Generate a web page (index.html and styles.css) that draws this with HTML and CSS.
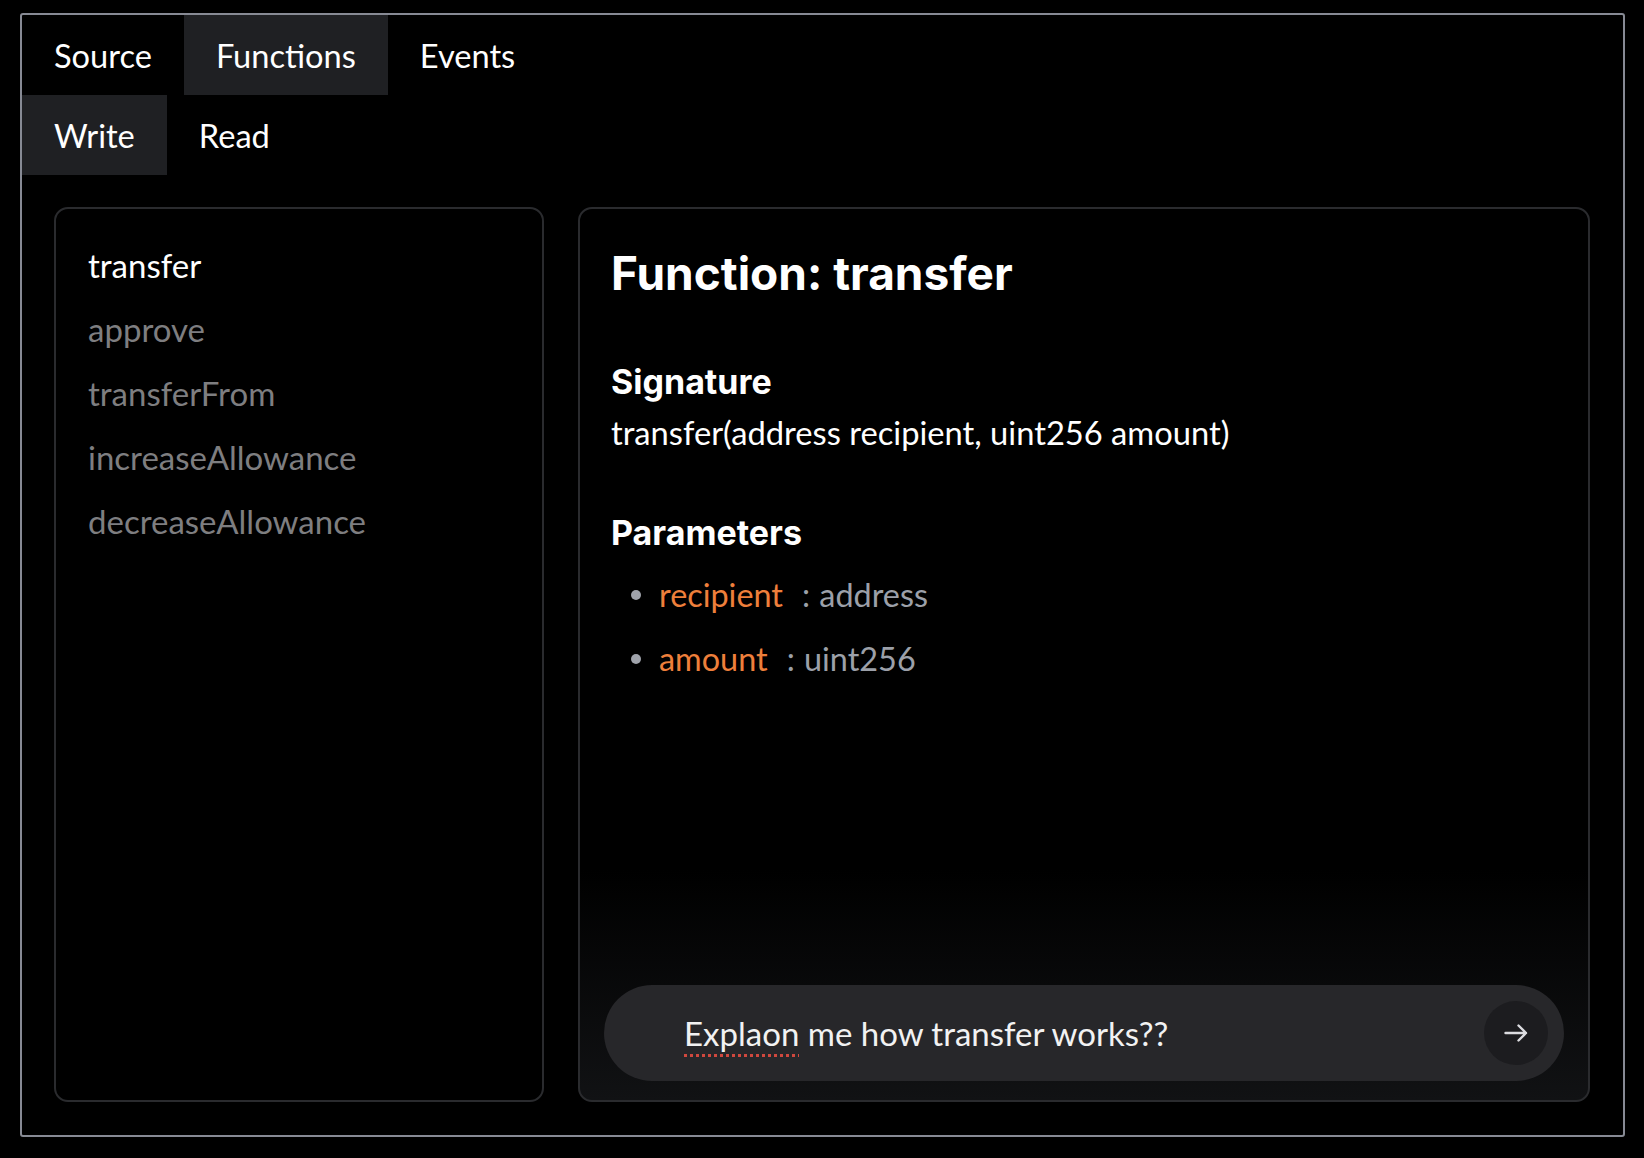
FILE: index.html
```html
<!DOCTYPE html>
<html lang="en">
<head>
<meta charset="utf-8">
<title>Contract Functions</title>
<link rel="stylesheet" href="styles.css">
</head>
<body>
<div class="panel">
  <nav class="tabs">
    <div class="tab">Source</div>
    <div class="tab active">Functions</div>
    <div class="tab">Events</div>
  </nav>
  <nav class="tabs">
    <div class="tab active">Write</div>
    <div class="tab">Read</div>
  </nav>
  <div class="content">
    <aside class="card fn-list">
      <div class="fn-item selected">transfer</div>
      <div class="fn-item">approve</div>
      <div class="fn-item">transferFrom</div>
      <div class="fn-item">increaseAllowance</div>
      <div class="fn-item">decreaseAllowance</div>
    </aside>
    <section class="card detail">
      <div class="detail-body">
        <h1 class="title">Function: transfer</h1>
        <h2 class="heading sig-heading">Signature</h2>
        <div class="signature">transfer(address recipient, uint256 amount)</div>
        <h2 class="heading params-heading">Parameters</h2>
        <ul class="params">
          <li><span class="pname">recipient</span><span class="ptype">: address</span></li>
          <li><span class="pname">amount</span><span class="ptype">: uint256</span></li>
        </ul>
      </div>
      <div class="chat">
        <div class="pill">
          <div class="pill-text"><span class="misspelled">Explaon</span> me how transfer works??</div>
          <button class="send" type="button" aria-label="Send">
            <svg width="24" height="24" viewBox="0 0 24 24" fill="none" stroke="#dcdce0" stroke-width="2.4" stroke-linecap="round" stroke-linejoin="round"><path d="M1.5 12H22M14.5 4.5L22 12L14.5 19.5"/></svg>
          </button>
        </div>
      </div>
    </section>
  </div>
</div>
</body>
</html>
```
FILE: styles.css
```css
* { box-sizing: border-box; }
html, body { margin: 0; padding: 0; background: #000; }
body {
  font-family: "Lato", "Noto Sans", sans-serif;
  color: #fff;
  padding: 13px 0 0 20px;
}
.panel {
  width: 1605px;
  height: 1124px;
  border: 2px solid #878a94;
  border-radius: 3px;
  display: flex;
  flex-direction: column;
}
.tabs {
  display: flex;
  height: 80px;
  flex: none;
}
.tab {
  padding: 0 32px;
  font-size: 32.6px;
  line-height: 81px;
  color: #fff;
}
.tab.active { background: #1f2023; }
.content {
  flex: 1;
  display: grid;
  grid-template-columns: 490px 1fr;
  gap: 34px;
  padding: 32px 33px 33px 32px;
  min-height: 0;
}
.card {
  border: 2px solid #2a2b2e;
  border-radius: 14px;
  background: #000;
}
.fn-list {
  padding: 24px 32px;
}
.fn-item {
  font-size: 33px;
  line-height: 64px;
  color: #7e7e80;
}
.fn-item.selected { color: #fff; }
.detail {
  display: flex;
  flex-direction: column;
  background: linear-gradient(to bottom, #000 0, #000 calc(100% - 230px), #111214 100%);
}
.detail-body {
  padding: 30px 31px;
}
.title {
  margin: 0;
  font-family: "Inter", sans-serif;
  font-weight: 700;
  font-size: 46px;
  line-height: 68px;
  color: #fff;
}
.heading {
  margin: 0;
  font-family: "Inter", sans-serif;
  font-weight: 700;
  font-size: 34px;
  line-height: 44px;
  color: #fff;
}
.sig-heading { margin-top: 53px; }
.signature {
  margin-top: 5px;
  font-size: 32.7px;
  line-height: 48px;
  color: #fff;
}
.params-heading { margin-top: 54px; }
.params {
  list-style: none;
  margin: 8px 0 0;
  padding: 0 0 0 20px;
}
.params li {
  display: flex;
  align-items: center;
  font-size: 32.4px;
  line-height: 64px;
}
.params li::before {
  content: "";
  width: 10px;
  height: 10px;
  border-radius: 50%;
  background: #a0a3ab;
  margin-right: 18px;
  flex: none;
}
.pname { color: #ee7f3b; }
.ptype { color: #9ca0a9; margin-left: 19px; word-spacing: 1px; }
.chat {
  margin-top: auto;
  padding: 0 24px 19px;
}
.pill {
  height: 96px;
  border-radius: 48px;
  background: #27272a;
  display: flex;
  align-items: center;
  padding: 0 16px 0 80px;
}
.pill-text {
  flex: 1;
  font-size: 33px;
  color: #f2f2f2;
}
.misspelled {
  text-decoration: underline dotted #d0483e;
  text-decoration-thickness: 3px;
  text-underline-offset: 8px;
}
.send {
  width: 64px;
  height: 64px;
  border-radius: 50%;
  border: none;
  background: #1c1c1f;
  display: flex;
  align-items: center;
  justify-content: center;
  padding: 0;
  flex: none;
}
```
